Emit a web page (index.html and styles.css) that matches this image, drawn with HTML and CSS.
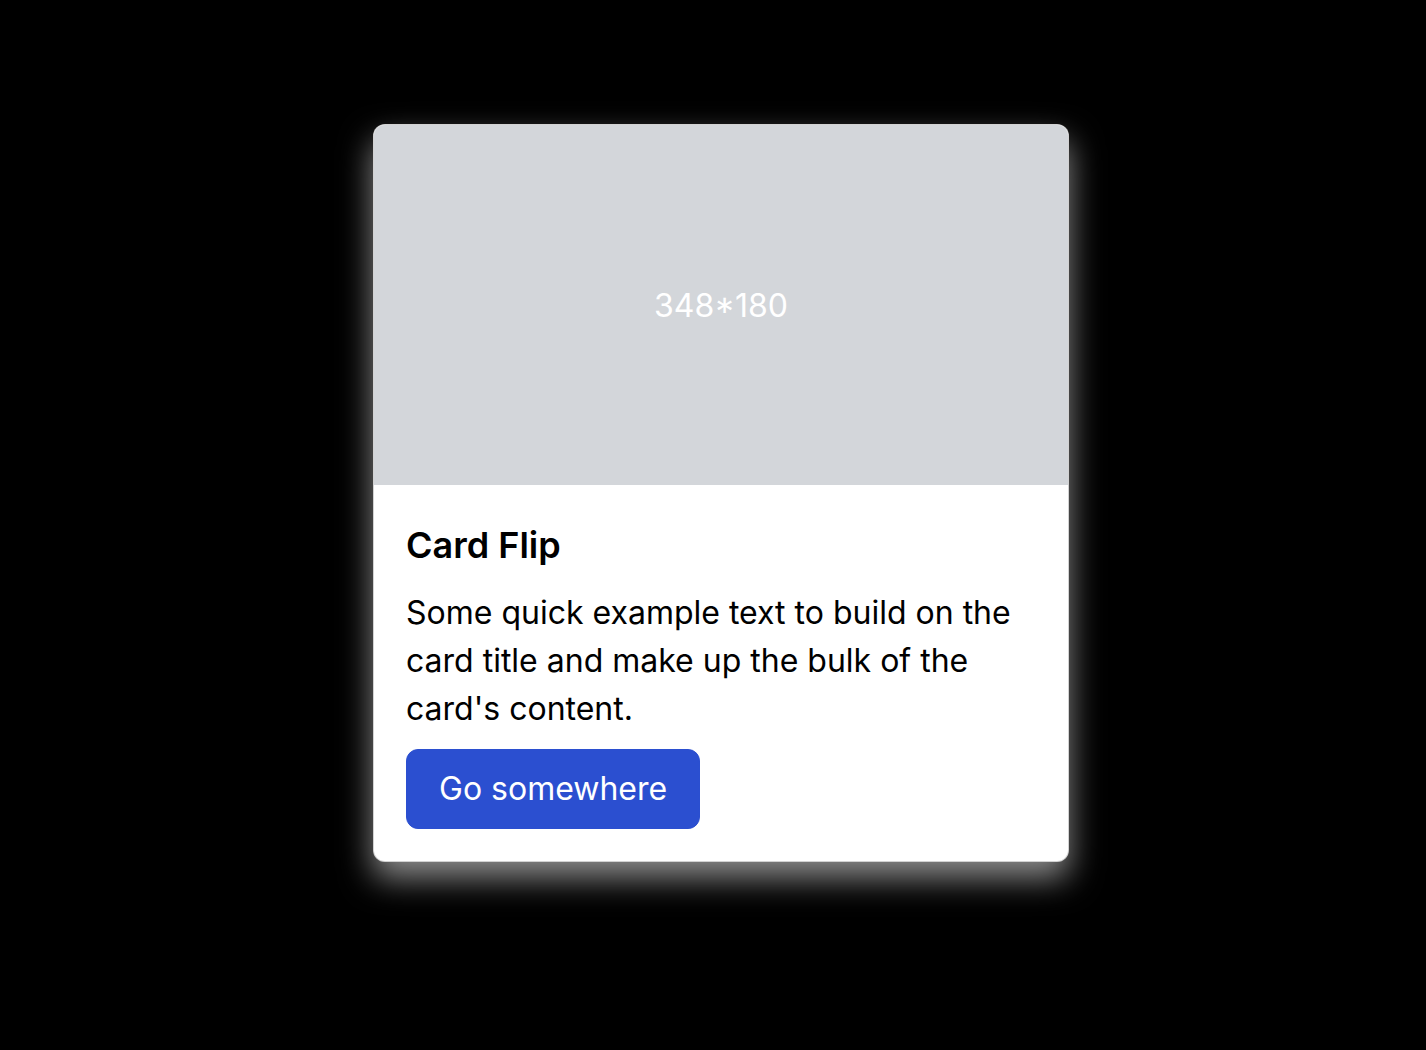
FILE: index.html
```html
<!DOCTYPE html>
<html lang="en">
<head>
<meta charset="utf-8">
<title>Card Flip</title>
<link rel="stylesheet" href="styles.css">
</head>
<body>
<main class="stage">
  <div class="card">
    <div class="card-img">348*180</div>
    <div class="card-body">
      <h5 class="card-title">Card Flip</h5>
      <p class="card-text">Some quick example text to build on the card title and make up the bulk of the card's content.</p>
      <a href="#" class="btn">Go somewhere</a>
    </div>
  </div>
</main>
</body>
</html>
```

FILE: styles.css
```css
html, body {
  margin: 0;
  padding: 0;
  background: #000;
  font-family: Inter, "Noto Sans", sans-serif;
}
.stage {
  display: flex;
  justify-content: center;
  padding: 124px 0 0 16px;
  min-height: 1050px;
  box-sizing: border-box;
}
.card {
  width: 696px;
  box-sizing: border-box;
  align-self: flex-start;
  background: #fff;
  border: 1px solid rgba(0, 0, 0, 0.175);
  border-radius: 12px;
  overflow: hidden;
  box-shadow: 0 16px 32px rgba(255, 255, 255, 0.55);
}
.card-img {
  height: 360px;
  background: #d3d6da;
  color: #fff;
  font-size: 32px;
  display: flex;
  align-items: center;
  justify-content: center;
}
.card-body {
  padding: 39px 32px 32px;
  color: #000;
}
.card-title {
  margin: 0 0 22px;
  font-size: 36px;
  font-weight: 600;
  line-height: 1.2;
}
.card-text {
  margin: 0 0 16px;
  font-size: 32px;
  line-height: 48px;
}
.btn {
  display: inline-block;
  padding: 15px 32px;
  border: 1px solid #2b4fd0;
  background: #2b4fd0;
  color: #fff;
  font-size: 32px;
  line-height: 48px;
  border-radius: 12px;
  text-decoration: none;
}
```
